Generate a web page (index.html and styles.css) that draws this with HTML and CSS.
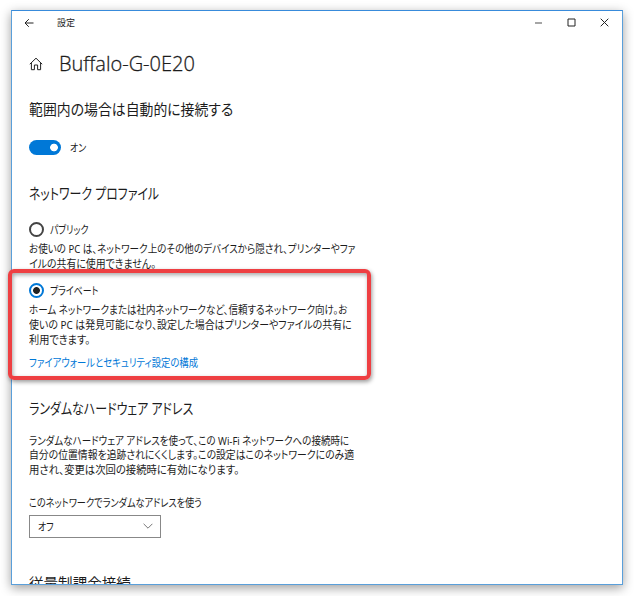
FILE: index.html
```html
<!DOCTYPE html>
<html lang="ja">
<head>
<meta charset="utf-8">
<title>設定</title>
<link rel="stylesheet" href="styles.css">
</head>
<body>
<main class="window">
  <header class="titlebar">
    <svg class="back" viewBox="0 0 10 10"><path d="M9.5 5H1M4.8 1.2 1 5l3.8 3.8"/></svg>
    <span class="app-name">設定</span>
    <div class="controls">
      <svg viewBox="0 0 9 9"><path class="minimize" d="M1 5h7"/></svg>
      <svg viewBox="0 0 9 9"><path d="M1 1h7v7H1z"/></svg>
      <svg viewBox="0 0 9 9"><path d="m.7.7 7.6 7.6M8.3.7.7 8.3"/></svg>
    </div>
  </header>
  <div class="content">
    <div class="page-title">
      <svg class="home" viewBox="0 0 14 14"><path d="M.8 7.2 7 1.2l6.2 6M2.4 6v6.7h3V8h3.2v4.7h3V6"/></svg>
      <h1>Buffalo-G-0E20</h1>
    </div>
    <h2 class="auto-connect">範囲内の場合は自動的に接続する</h2>
    <div class="toggle-row"><span class="toggle"></span><span class="kana">オン</span></div>
    <h2 class="profile">ネットワーク プロファイル</h2>
    <div class="option public"><span class="radio"></span><span class="kana">パブリック</span></div>
    <p class="desc">
      <span class="line l1">お使いの PC は、ネットワーク上のその他のデバイスから隠され、プリンターやファ</span>
      <span class="line l2">イルの共有に使用できません。</span>
    </p>
    <div class="option private"><span class="radio checked"></span><span class="kana">プライベート</span></div>
    <p class="desc">
      <span class="line l3">ホーム ネットワークまたは社内ネットワークなど、信頼するネットワーク向け。お</span>
      <span class="line l4">使いの PC は発見可能になり、設定した場合はプリンターやファイルの共有に</span>
      <span class="line l5">利用できます。</span>
    </p>
    <a class="link">ファイアウォールとセキュリティ設定の構成</a>
    <h2 class="random">ランダムなハードウェア アドレス</h2>
    <p class="desc">
      <span class="line l6">ランダムなハードウェア アドレスを使って、この Wi-Fi ネットワークへの接続時に</span>
      <span class="line l7">自分の位置情報を追跡されにくくします。この設定はこのネットワークにのみ適</span>
      <span class="line l8">用され、変更は次回の接続時に有効になります。</span>
    </p>
    <div class="label">このネットワークでランダムなアドレスを使う</div>
    <div class="select"><span class="kana">オフ</span><svg viewBox="0 0 10 6"><path d="m.6.8 4.4 4.4L9.4.8"/></svg></div>
    <h2 class="metered">従量制課金接続</h2>
  </div>
</main>
<div class="highlight"></div>
</body>
</html>
```
FILE: styles.css
```css
* { box-sizing: border-box; }
body {
  margin: 0;
  width: 634px;
  height: 596px;
  padding: 10px 11px 11px 11px;
  overflow: hidden;
  background: #fff;
  color: #1c1c1c;
  font: 11px/15px "Noto Sans", "Noto Sans CJK JP", sans-serif;
  font-feature-settings: "palt";
  white-space: nowrap;
}
svg { display: block; fill: none; stroke: #222; stroke-width: 1; }
h1, h2, p { margin: 0; font-weight: 400; }
.window {
  width: 612px;
  height: 575px;
  overflow: hidden;
  border: 1px solid #5a9fda;
  border-top-color: #388bdb;
  background: #fff;
  box-shadow: 0 3px 10px rgba(0, 0, 0, .38);
}
.titlebar { display: flex; align-items: center; height: 23px; padding: 0 13px 0 12px; }
.back { width: 10px; height: 10px; margin-right: 23px; }
.app-name { font-size: 9px; }
.controls { display: flex; gap: 24px; margin-left: auto; }
.controls svg { width: 9px; height: 9px; }
.controls .minimize { stroke: #888; stroke-width: 1.5; }
.content { padding: 0 17px; }
.page-title { display: flex; align-items: center; height: 30px; margin-top: 15px; }
.home { width: 14px; height: 14px; margin-right: 16px; }
h1 { font-family: "Open Sans", sans-serif; font-size: 20px; font-weight: 300; line-height: 30px; -webkit-text-stroke: .3px #1c1c1c; }
h2 { height: 22px; font-size: 15px; line-height: 22px; }

h2, .line, .link, .label, .kana { transform-origin: left; }
.kana { transform: scaleX(.81); }
.auto-connect { margin-top: 19px; transform: scaleX(.925); }
.toggle-row { display: flex; align-items: center; gap: 9px; height: 15px; margin-top: 20px; }
.toggle { width: 32px; height: 15px; border-radius: 8px; background: radial-gradient(circle at 25px 7.5px, #fff 3.5px, #0078d7 4.2px); }
.profile { margin-top: 27px; transform: scaleX(.795); }
.option { display: flex; align-items: center; gap: 6px; height: 16px; }
.public { margin-top: 17px; }
.private { margin-top: 11px; }
.radio { width: 15px; height: 15px; border: 2px solid #444; border-radius: 50%; }
.radio.checked { border-color: #0078d7; background: radial-gradient(circle, #222 3px, #fff 3.8px); }
.desc { margin-top: 5px; line-height: 14.7px; }
.line { display: block; }
.l1 { transform: scaleX(.869); }
.l2 { transform: scaleX(.9); }
.l3 { transform: scaleX(.866); }
.l4 { transform: scaleX(.902); }
.l5 { transform: scaleX(.925); }
.l6 { transform: scaleX(.865); }
.l7 { transform: scaleX(.895); }
.l8 { transform: scaleX(.94); }
.link { display: block; margin-top: 7px; color: #0078d7; transform: scaleX(.85); }
.random { margin-top: 27px; transform: scaleX(.797); }
.random + .desc { margin-top: 15px; }
.label { margin-top: 17px; transform: scaleX(.832); }
.select { display: flex; align-items: center; justify-content: space-between; width: 132px; height: 23px; margin-top: 5px; padding: 0 7px 0 8px; border: 1px solid #888; }
.select svg { width: 10px; height: 6px; stroke: #777; }
.metered { margin-top: 34px; transform: scaleX(.97); }
.highlight {
  position: absolute;
  left: 8px;
  top: 269px;
  width: 363px;
  height: 111px;
  border: 4px solid #ee3f42;
  border-radius: 6px;
  box-shadow: 1px 2px 4px rgba(0, 0, 0, .4), inset 1px 2px 4px rgba(0, 0, 0, .35);
}
```
